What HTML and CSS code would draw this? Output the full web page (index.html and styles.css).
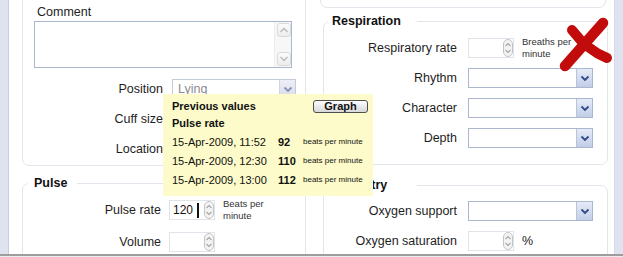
FILE: index.html
```html
<!DOCTYPE html>
<html>
<head>
<meta charset="utf-8">
<link rel="stylesheet" href="styles.css">
</head>
<body>
<div class="page">
  <div class="strip strip-left"></div>
  <div class="content">
    <div class="col col-left">
      <div class="panel panel-comment">
        <div class="comment-label">Comment</div>
        <div class="textarea">
          <div class="scroll">
            <span class="sb-btn"><svg width="10" height="8" viewBox="0 0 10 8"><path d="M1.5 6 L5 2.5 L8.5 6" fill="none" stroke="#b9b9b9" stroke-width="1.3"/></svg></span>
            <span class="sb-btn"><svg width="10" height="8" viewBox="0 0 10 8"><path d="M1.5 2 L5 5.5 L8.5 2" fill="none" stroke="#b9b9b9" stroke-width="1.3"/></svg></span>
          </div>
        </div>
        <div class="form form-bp">
          <label class="lbl">Position</label>
          <div class="select select-disabled"><span class="sel-val">Lying</span><span class="arrow"><svg width="10" height="7" viewBox="0 0 10 7"><path d="M1.5 1.5 L5 5 L8.5 1.5" fill="none" stroke="#8a93b5" stroke-width="1.8"/></svg></span></div>
          <label class="lbl">Cuff size</label>
          <div class="select"><span class="arrow"><svg width="10" height="7" viewBox="0 0 10 7"><path d="M1.5 1.5 L5 5 L8.5 1.5" fill="none" stroke="#2d4a8a" stroke-width="1.8"/></svg></span></div>
          <label class="lbl">Location</label>
          <div class="select"><span class="arrow"><svg width="10" height="7" viewBox="0 0 10 7"><path d="M1.5 1.5 L5 5 L8.5 1.5" fill="none" stroke="#2d4a8a" stroke-width="1.8"/></svg></span></div>
        </div>
      </div>
      <fieldset class="group group-pulse">
        <legend>Pulse</legend>
        <div class="form form-pulse">
          <label class="lbl">Pulse rate</label>
          <div class="ctl">
            <div class="num"><span class="num-val">120</span><span class="caret"></span><span class="spin"><svg width="10" height="18" viewBox="0 0 10 18"><rect x="0.5" y="0.5" width="9" height="17" rx="4.5" fill="#f3f3f3" stroke="#c4c4c4"/><path d="M2.5 7 L5 4.5 L7.5 7" fill="none" stroke="#a5a5a5" stroke-width="1.1"/><path d="M2.5 11 L5 13.5 L7.5 11" fill="none" stroke="#a5a5a5" stroke-width="1.1"/></svg></span></div>
            <span class="unit">Beats per<br>minute</span>
          </div>
          <label class="lbl">Volume</label>
          <div class="ctl">
            <div class="num"><span class="spin"><svg width="10" height="18" viewBox="0 0 10 18"><rect x="0.5" y="0.5" width="9" height="17" rx="4.5" fill="#f3f3f3" stroke="#c4c4c4"/><path d="M2.5 7 L5 4.5 L7.5 7" fill="none" stroke="#a5a5a5" stroke-width="1.1"/><path d="M2.5 11 L5 13.5 L7.5 11" fill="none" stroke="#a5a5a5" stroke-width="1.1"/></svg></span></div>
          </div>
        </div>
      </fieldset>
    </div>
    <div class="col col-right">
      <div class="panel panel-top"></div>
      <fieldset class="group group-resp">
        <legend>Respiration</legend>
        <div class="form form-right">
          <label class="lbl">Respiratory rate</label>
          <div class="ctl">
            <div class="num"><span class="spin"><svg width="10" height="18" viewBox="0 0 10 18"><rect x="0.5" y="0.5" width="9" height="17" rx="4.5" fill="#f3f3f3" stroke="#c4c4c4"/><path d="M2.5 7 L5 4.5 L7.5 7" fill="none" stroke="#a5a5a5" stroke-width="1.1"/><path d="M2.5 11 L5 13.5 L7.5 11" fill="none" stroke="#a5a5a5" stroke-width="1.1"/></svg></span></div>
            <span class="unit">Breaths per<br>minute</span>
          </div>
          <label class="lbl">Rhythm</label>
          <div class="select"><span class="arrow"><svg width="10" height="7" viewBox="0 0 10 7"><path d="M1.5 1.5 L5 5 L8.5 1.5" fill="none" stroke="#2d4a8a" stroke-width="1.8"/></svg></span></div>
          <label class="lbl">Character</label>
          <div class="select"><span class="arrow"><svg width="10" height="7" viewBox="0 0 10 7"><path d="M1.5 1.5 L5 5 L8.5 1.5" fill="none" stroke="#2d4a8a" stroke-width="1.8"/></svg></span></div>
          <label class="lbl">Depth</label>
          <div class="select"><span class="arrow"><svg width="10" height="7" viewBox="0 0 10 7"><path d="M1.5 1.5 L5 5 L8.5 1.5" fill="none" stroke="#2d4a8a" stroke-width="1.8"/></svg></span></div>
        </div>
      </fieldset>
      <fieldset class="group group-oxi">
        <legend>Oximetry</legend>
        <div class="form form-right form-oxi">
          <label class="lbl">Oxygen support</label>
          <div class="select"><span class="arrow"><svg width="10" height="7" viewBox="0 0 10 7"><path d="M1.5 1.5 L5 5 L8.5 1.5" fill="none" stroke="#2d4a8a" stroke-width="1.8"/></svg></span></div>
          <label class="lbl">Oxygen saturation</label>
          <div class="ctl">
            <div class="num"><span class="spin"><svg width="10" height="18" viewBox="0 0 10 18"><rect x="0.5" y="0.5" width="9" height="17" rx="4.5" fill="#f3f3f3" stroke="#c4c4c4"/><path d="M2.5 7 L5 4.5 L7.5 7" fill="none" stroke="#a5a5a5" stroke-width="1.1"/><path d="M2.5 11 L5 13.5 L7.5 11" fill="none" stroke="#a5a5a5" stroke-width="1.1"/></svg></span></div>
            <span class="pct">%</span>
          </div>
        </div>
      </fieldset>
    </div>
  </div>
  <div class="strip strip-right"></div>

  <div class="tooltip">
    <div class="tt-head">
      <span class="tt-title">Previous values</span>
      <span class="tt-btn">Graph</span>
    </div>
    <div class="tt-sub">Pulse rate</div>
    <div class="tt-rows">
      <span>15-Apr-2009, 11:52</span><b>92</b><span class="tt-unit">beats per minute</span>
      <span>15-Apr-2009, 12:30</span><b>110</b><span class="tt-unit">beats per minute</span>
      <span>15-Apr-2009, 13:00</span><b>112</b><span class="tt-unit">beats per minute</span>
    </div>
  </div>

  <svg class="reject" width="58" height="58" viewBox="0 0 58 58">
    <path d="M47 8 Q 31 26 9 51" fill="none" stroke="#c20b0b" stroke-width="10.5" stroke-linecap="round"/>
    <path d="M16 15 Q 31 35 51 43" fill="none" stroke="#c20b0b" stroke-width="10" stroke-linecap="round"/>
  </svg>
</div>
<div class="bottom-bar"></div>
</body>
</html>
```

FILE: styles.css
```css
* { box-sizing: border-box; }
html, body { margin: 0; padding: 0; }
body {
  width: 623px;
  height: 257px;
  overflow: hidden;
  background: #fff;
  font-family: "Liberation Sans", Arial, sans-serif;
  font-size: 12.5px;
  color: #1e1e1e;
}
.page {
  position: relative;
  display: flex;
  height: 254px;
  overflow: hidden;
}
.strip { width: 9px; flex: none; background: #dfe3ef; }
.strip-left { border-right: 1px solid #c7cde0; }
.strip-right { border-left: 1px solid #d5dae8; }
.content {
  flex: 1;
  display: flex;
  gap: 17px;
  padding: 0 6px 0 13px;
  overflow: hidden;
}
.col { display: flex; flex-direction: column; flex: none; }
.col-left { width: 284px; }
.col-right { width: 285px; }
.bottom-bar { height: 3px; border-top: 2px solid #9d9d9d; background: #ececec; }

.panel { border: 1px solid #e2e5eb; border-radius: 7px; flex: none; }
.panel-comment { margin-top: -10px; padding: 14px 12px 6px 11px; }
.panel-top { height: 28px; margin: -20px 2px 0 -3px; }

.comment-label { line-height: 15px; padding-left: 3px; }
.textarea {
  margin-top: 1px;
  width: 258px;
  height: 47px;
  border: 1px solid #a9b7cf;
  display: flex;
  background: #fff;
}
.scroll {
  margin-left: auto;
  width: 17px;
  padding: 1px 1px 1px 2px;
  display: flex;
  flex-direction: column;
  justify-content: space-between;
  background: #f7f7f7;
  border-left: 1px solid #ececec;
}
.sb-btn {
  width: 14px; height: 14px;
  border: 1px solid #dadada;
  border-radius: 3px;
  background: linear-gradient(#fbfbfb, #ececec);
  display: flex; align-items: center; justify-content: center;
}

.form { display: grid; align-items: center; }
.lbl { text-align: right; line-height: 20px; white-space: nowrap; }
.form-bp {
  margin-top: 11px;
  grid-template-columns: 129px 124px;
  column-gap: 9px;
  grid-auto-rows: 20px;
  row-gap: 10px;
}

.group {
  margin: 0;
  border: 1px solid #e2e5eb;
  border-radius: 7px;
  min-width: 0;
  flex: none;
}
.group legend {
  font-weight: bold;
  font-size: 12.5px;
  line-height: 16px;
  color: #111;
  padding: 0;
}
.group-pulse { margin-top: 9px; padding: 9px 12px 30px 5px; }
.group-pulse legend { width: 49px; padding-left: 6px; }
.form-pulse {
  grid-template-columns: 133px auto;
  column-gap: 8px;
  grid-auto-rows: 20px;
  row-gap: 12px;
}

.group-resp { margin-top: 5px; padding: 9px 10px 16px 4px; }
.group-resp legend, .group-oxi legend { width: 89px; padding-left: 4px; }
.group-oxi { margin-top: 12px; padding: 8px 10px 30px 4px; }
.group-oxi legend { padding-left: 5px; }
.form-right {
  grid-template-columns: 129px 125px;
  column-gap: 11px;
  grid-auto-rows: 20px;
  row-gap: 10px;
}

.select {
  height: 20px;
  border: 1px solid #a9b7cf;
  background: #fff;
  display: flex;
  align-items: center;
}
.sel-val { padding-left: 5px; color: #8c8c8c; font-size: 12.5px; }
.select .arrow {
  margin-left: auto;
  width: 16px;
  height: 18px;
  background: linear-gradient(#e6ebf7, #c2cde7);
  border-left: 1px solid #b8c3dc;
  display: flex; align-items: center; justify-content: center;
}
.select-disabled { border-color: #c3cad9; }
.select-disabled .arrow { background: linear-gradient(#eeeef6, #d9dbea); border-left-color: #d0d3e2; }

.ctl { display: flex; align-items: center; gap: 8px; }
.num {
  width: 46px;
  height: 20px;
  border: 1px solid #dfe3ea;
  background: #fff;
  display: flex;
  align-items: center;
  padding-left: 3px;
}
.num-val { font-size: 12px; color: #111; }
.caret { width: 2px; height: 15px; background: #111; margin-left: 4px; }
.spin { margin-left: auto; display: flex; }
.unit { font-size: 9.5px; line-height: 12px; color: #333; }
.pct { font-size: 12.5px; color: #222; }

.tooltip {
  position: absolute;
  left: 163px;
  top: 94px;
  width: 210px;
  height: 102px;
  background: #fcfbc9;
  padding: 5px 5px 0 9px;
  font-size: 11px;
  color: #111;
}
.tt-head { display: flex; justify-content: space-between; align-items: center; height: 14px; }
.tt-title { font-weight: bold; line-height: 14px; }
.tt-btn {
  width: 55px;
  height: 13px;
  border: 1px solid #4f4f4f;
  border-radius: 3px;
  background: linear-gradient(#fdfdfd, #d8d8d8);
  font-weight: bold;
  font-size: 11px;
  line-height: 11px;
  text-align: center;
}
.tt-sub { font-weight: bold; line-height: 14px; margin-top: 3px; }
.tt-rows {
  margin-top: 2px;
  display: grid;
  grid-template-columns: 106px 25px auto;
  grid-auto-rows: 19px;
  align-items: center;
}
.tt-unit { font-size: 8px; }

.reject { position: absolute; left: 556px; top: 15px; }
```
